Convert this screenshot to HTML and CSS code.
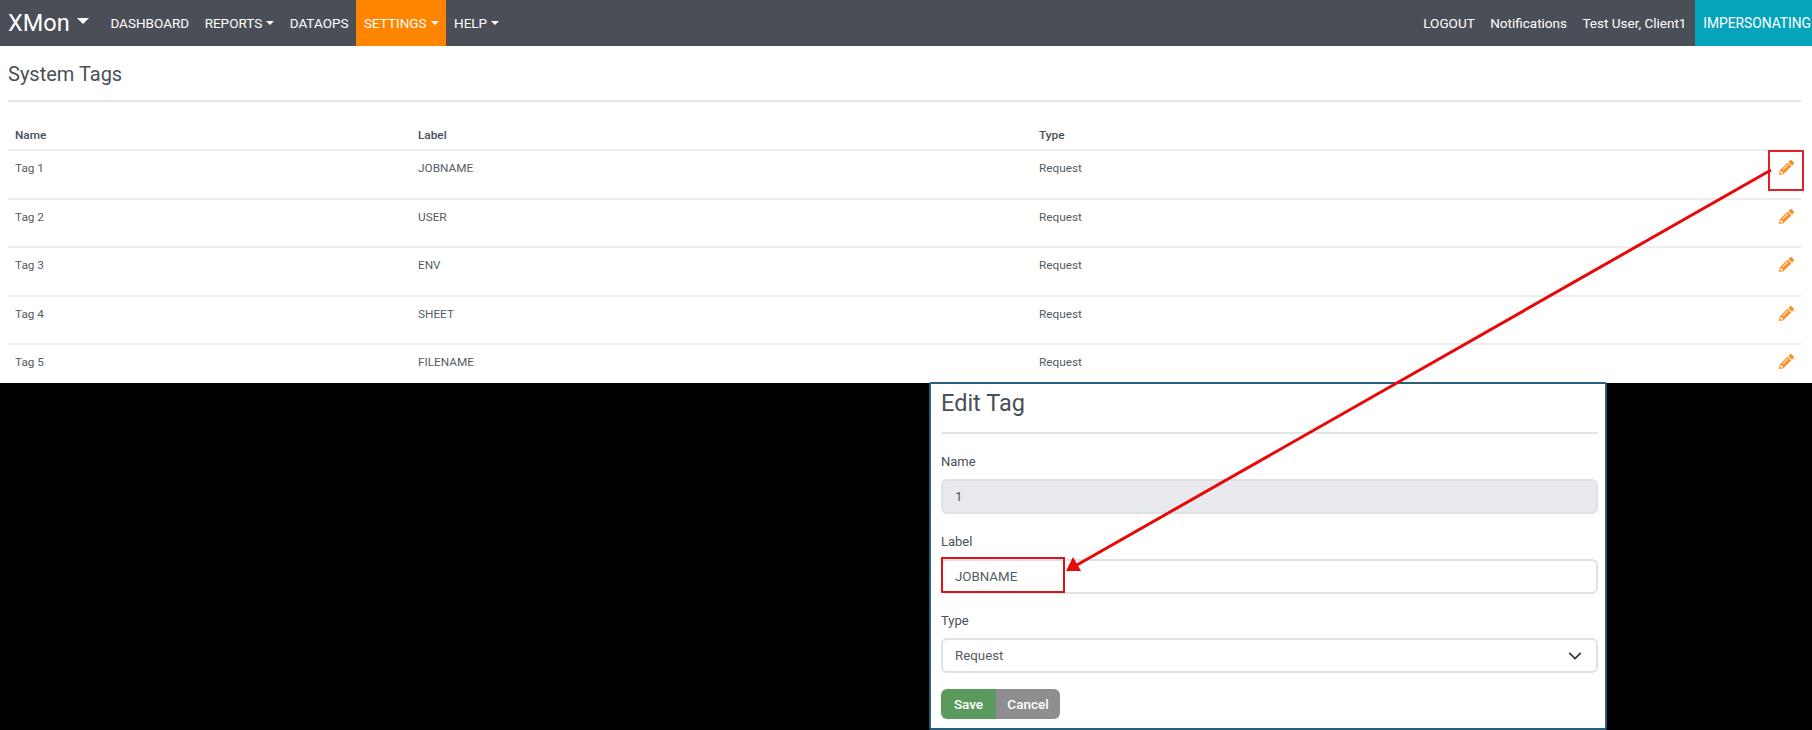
FILE: index.html
```html
<!DOCTYPE html>
<html lang="en">
<head>
<meta charset="utf-8">
<title>System Tags</title>
<link rel="stylesheet" href="styles.css">
</head>
<body>
<div class="page">
  <nav class="navbar">
    <a class="brand">XMon<span class="caret caret-lg"></span></a>
    <ul class="nav-left">
      <li class="nav-item">DASHBOARD</li>
      <li class="nav-item">REPORTS<span class="caret"></span></li>
      <li class="nav-item">DATAOPS</li>
      <li class="nav-item active">SETTINGS<span class="caret"></span></li>
      <li class="nav-item">HELP<span class="caret"></span></li>
    </ul>
    <ul class="nav-right">
      <li class="nav-item">LOGOUT</li>
      <li class="nav-item">Notifications</li>
      <li class="nav-item">Test User, Client1</li>
      <li class="nav-item impersonating">IMPERSONATING</li>
    </ul>
  </nav>

  <main class="content">
    <h1 class="page-title">System Tags</h1>
    <table class="tags">
      <thead>
        <tr><th class="col-name">Name</th><th class="col-label">Label</th><th class="col-type">Type</th><th></th></tr>
      </thead>
      <tbody>
        <tr><td>Tag 1</td><td>JOBNAME</td><td>Request</td><td class="action"><svg class="pencil" viewBox="0 0 512 512"><use href="#pencil-alt"/></svg></td></tr>
        <tr><td>Tag 2</td><td>USER</td><td>Request</td><td class="action"><svg class="pencil" viewBox="0 0 512 512"><use href="#pencil-alt"/></svg></td></tr>
        <tr><td>Tag 3</td><td>ENV</td><td>Request</td><td class="action"><svg class="pencil" viewBox="0 0 512 512"><use href="#pencil-alt"/></svg></td></tr>
        <tr><td>Tag 4</td><td>SHEET</td><td>Request</td><td class="action"><svg class="pencil" viewBox="0 0 512 512"><use href="#pencil-alt"/></svg></td></tr>
        <tr><td>Tag 5</td><td>FILENAME</td><td>Request</td><td class="action"><svg class="pencil" viewBox="0 0 512 512"><use href="#pencil-alt"/></svg></td></tr>
      </tbody>
    </table>
  </main>

  <section class="lower">
    <form class="modal">
      <h2 class="modal-title">Edit Tag</h2>
      <div class="field">
        <label class="field-label" for="f-name">Name</label>
        <input class="control" id="f-name" value="1" disabled>
      </div>
      <div class="field">
        <label class="field-label" for="f-label">Label</label>
        <input class="control" id="f-label" value="JOBNAME">
      </div>
      <div class="field">
        <label class="field-label" for="f-type">Type</label>
        <div class="select-wrap">
          <select class="control select" id="f-type"><option>Request</option></select>
          <svg class="chevron" viewBox="0 0 16 16"><path d="M2 5l6 6 6-6" fill="none" stroke="#343a40" stroke-width="2" stroke-linecap="round" stroke-linejoin="round"/></svg>
        </div>
      </div>
      <div class="btn-group">
        <button type="button" class="btn btn-save">Save</button>
        <button type="button" class="btn btn-cancel">Cancel</button>
      </div>
    </form>
  </section>

  <svg class="annotations" viewBox="0 0 1812 730" width="1812" height="730">
    <rect x="1769" y="151" width="34" height="39" fill="none" stroke="#e0202a" stroke-width="2"/>
    <rect x="942" y="558" width="122" height="34" fill="none" stroke="#d8141c" stroke-width="2"/>
    <line x1="1771" y1="170" x2="1076" y2="565.5" stroke="#e80808" stroke-width="3"/>
    <polygon points="1066,571 1073,557 1081,571" fill="#e80808"/>
  </svg>
</div>

<svg class="defs" width="0" height="0">
  <symbol id="pencil-alt" viewBox="0 0 512 512">
    <path fill="currentColor" d="M497.9 142.1l-46.1 46.1c-4.7 4.7-12.3 4.7-17 0l-111-111c-4.7-4.7-4.7-12.3 0-17l46.1-46.1c18.7-18.7 49.1-18.7 67.9 0l60.1 60.1c18.8 18.7 18.8 49.1 0 67.9zM284.2 99.8L21.6 362.4.4 483.9c-2.9 16.4 11.4 30.6 27.8 27.8l121.5-21.3 262.6-262.6c4.7-4.7 4.7-12.3 0-17l-111-111c-4.8-4.7-12.4-4.7-17.1 0zM124.1 339.9c-5.5-5.5-5.5-14.3 0-19.8l154-154c5.5-5.5 14.3-5.5 19.8 0s5.5 14.3 0 19.8l-154 154c-5.5 5.5-14.3 5.5-19.8 0zM88 424h48v36.3l-64.5 11.3-31.1-31.1L51.7 376H88v48z"/>
  </symbol>
</svg>
</body>
</html>
```

FILE: styles.css
```css
* { box-sizing: border-box; }

html, body {
  margin: 0;
  padding: 0;
  background: #000;
}

body {
  font-family: Roboto, "Liberation Sans", sans-serif;
  color: #495057;
  overflow: hidden;
}

.page {
  position: relative;
  width: 1812px;
  height: 730px;
  overflow: hidden;
  background: #000;
}

/* Navbar */
.navbar {
  display: flex;
  align-items: stretch;
  height: 46px;
  padding-left: 8px;
  background: #4a4e57;
  color: #fff;
}

.brand {
  display: flex;
  align-items: center;
  font-size: 23.5px;
  line-height: 46px;
  margin-right: 14px;
}

.nav-left,
.nav-right {
  display: flex;
  align-items: stretch;
  list-style: none;
  margin: 0;
  padding: 0;
}

.nav-right { margin-left: auto; }

.nav-item {
  display: flex;
  align-items: center;
  padding: 0 7.75px;
  font-size: 13.5px;
}

.nav-item.active {
  background: #ff8400;
}

.nav-item.impersonating {
  background: #06a3bd;
  margin-left: 1px;
  padding: 0 1px 0 8px;
  font-size: 13.8px;
}

.caret {
  display: inline-block;
  width: 0;
  height: 0;
  margin-left: 4px;
  border-top: 4px solid currentColor;
  border-left: 4px solid transparent;
  border-right: 4px solid transparent;
}

.caret-lg {
  margin-left: 7px;
  margin-top: -4px;
  border-top-width: 6px;
  border-left-width: 6px;
  border-right-width: 6px;
}

/* Page content */
.content {
  height: 337px;
  padding: 0 11px 0 8px;
  background: #fff;
  overflow: hidden;
}

.page-title {
  margin: 0;
  height: 56px;
  padding-top: 15px;
  font-size: 20px;
  line-height: 26px;
  font-weight: 400;
  border-bottom: 2px solid #e3e4e6;
}

.tags {
  width: 100%;
  margin-top: 17px;
  border-collapse: collapse;
  table-layout: fixed;
  font-size: 11.8px;
  color: #555c64;
}

.col-name { width: 403px; }
.col-label { width: 621px; }
.col-type { width: 729px; }

.tags th {
  height: 31px;
  padding: 2px 7px 0;
  text-align: left;
  font-weight: 500;
  line-height: 14px;
  color: #495057;
}

.tags td {
  height: 48.6px;
  padding: 9px 7px 0;
  vertical-align: top;
  line-height: 16px;
  border-top: 2px solid #eceded;
}

.tags td.action {
  padding: 9px 0 0;
  text-align: right;
}

.pencil {
  display: block;
  width: 15px;
  height: 15px;
  margin-left: auto;
  margin-right: 7px;
  color: #fb9227;
}

/* Lower band with the edit dialog */
.lower {
  display: flex;
  padding-left: 929px;
  margin-top: -1px;
}

.modal {
  width: 678px;
  height: 348px;
  padding: 0 7px 0 10px;
  background: #fff;
  border: 2px solid #27607f;
  border-radius: 2px;
}

.modal-title {
  margin: 0 0 20px;
  height: 50px;
  padding-top: 4px;
  font-size: 23.5px;
  line-height: 30px;
  font-weight: 400;
  border-bottom: 2px solid #e3e4e6;
}

.field { margin-bottom: 19.5px; }

.field-label {
  display: block;
  height: 16px;
  margin-bottom: 9px;
  font-size: 13px;
  line-height: 16px;
}

.control {
  display: block;
  width: 100%;
  height: 35px;
  padding: 0 12px;
  font: 13.3px Roboto, "Liberation Sans", sans-serif;
  color: #555c64;
  background: #fff;
  border: 2px solid #dfe2e5;
  border-radius: 6px;
  appearance: none;
  outline: none;
}

.control:disabled {
  background: #e8eaed;
  opacity: 1;
}

.select-wrap { position: relative; }

.chevron {
  position: absolute;
  right: 16px;
  top: 11px;
  width: 14px;
  height: 14px;
  pointer-events: none;
}

.btn-group {
  display: flex;
  margin-top: -3.5px;
}

.btn {
  height: 30px;
  padding: 0;
  border: 0;
  color: #fff;
  font: 500 13.5px Roboto, "Liberation Sans", sans-serif;
}

.btn-save {
  width: 55px;
  background: #5a9a5c;
  border-radius: 6px 0 0 6px;
}

.btn-cancel {
  width: 64px;
  background: #8e8e90;
  border-radius: 0 6px 6px 0;
}

/* Red annotation overlay */
.annotations {
  position: absolute;
  left: 0;
  top: 0;
  pointer-events: none;
}

.defs { position: absolute; }
```
